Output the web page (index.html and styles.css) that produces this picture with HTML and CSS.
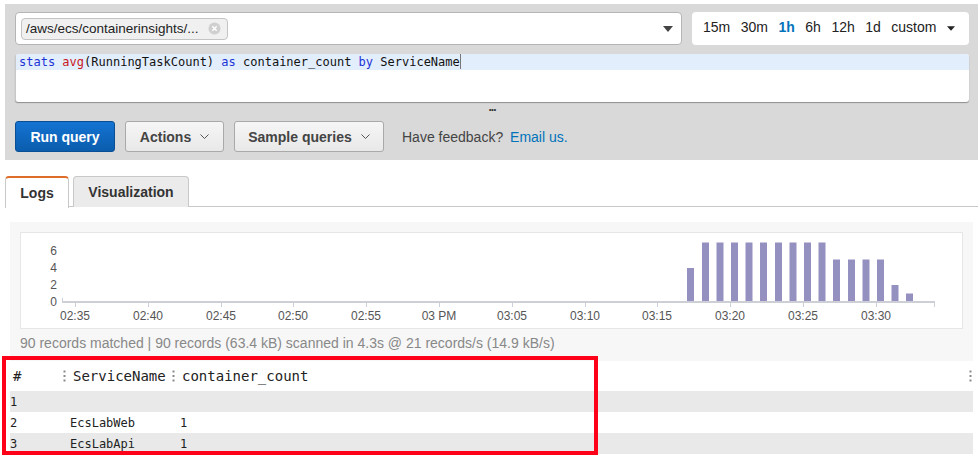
FILE: index.html
```html
<!DOCTYPE html>
<html>
<head>
<meta charset="utf-8">
<link rel="stylesheet" href="styles.css">
</head>
<body>
<div class="page">
  <section class="query-panel">
    <div class="top-row">
      <div class="group-select">
        <span class="chip">/aws/ecs/containerinsights/...
          <svg class="chip-x" width="13" height="13" viewBox="0 0 13 13"><circle cx="6.5" cy="6.5" r="6" fill="#cfcfcf"/><path d="M4.3 4.3l4.4 4.4M8.7 4.3l-4.4 4.4" stroke="#fff" stroke-width="1.5"/></svg>
        </span>
        <svg class="caret" width="10" height="6" viewBox="0 0 10 6"><path d="M0 0h10L5 6z" fill="#444"/></svg>
      </div>
      <div class="time-range">
        <span>15m</span><span>30m</span><span class="active">1h</span><span>6h</span><span>12h</span><span>1d</span><span>custom</span>
        <svg class="tr-caret" width="9" height="5" viewBox="0 0 9 5"><path d="M0 0h9L4.5 5z" fill="#222"/></svg>
      </div>
    </div>
    <div class="editor">
      <div class="line active-line"><span class="kw">stats</span> <span class="fn">avg</span>(RunningTaskCount) <span class="kw">as</span> container_count <span class="kw">by</span> ServiceName<span class="cursor"></span></div>
    </div>
    <div class="grip">...</div>
    <div class="btn-row">
      <button class="btn primary">Run query</button>
      <button class="btn btn-actions">Actions <svg class="chev" width="9" height="5" viewBox="0 0 9 5"><path d="M0.5 0.5l4 4 4-4" fill="none" stroke="#555" stroke-width="1"/></svg></button>
      <button class="btn btn-sample">Sample queries <svg class="chev" width="9" height="5" viewBox="0 0 9 5"><path d="M0.5 0.5l4 4 4-4" fill="none" stroke="#555" stroke-width="1"/></svg></button>
      <span class="feedback">Have feedback? <a class="link">Email us.</a></span>
    </div>
  </section>

  <nav class="tabs">
    <div class="tab active">Logs</div>
    <div class="tab tab-vis">Visualization</div>
  </nav>

  <section class="results">
    <div class="chart-box">
      <svg class="chart" width="943" height="97" viewBox="0 0 943 97">
        <g font-family="Liberation Sans, Arial, sans-serif" font-size="12" fill="#555" text-anchor="end">
          <text x="37" y="23">6</text>
          <text x="37" y="40">4</text>
          <text x="37" y="57">2</text>
          <text x="37" y="74">0</text>
        </g>
        <g fill="#9491c1">
          <rect x="667" y="36" width="7" height="34"/>
          <rect x="682" y="10.5" width="7" height="59.5"/>
          <rect x="696.5" y="10.5" width="7" height="59.5"/>
          <rect x="711" y="10.5" width="7" height="59.5"/>
          <rect x="725.5" y="10.5" width="7" height="59.5"/>
          <rect x="740" y="10.5" width="7" height="59.5"/>
          <rect x="755" y="10.5" width="7" height="59.5"/>
          <rect x="769.5" y="10.5" width="7" height="59.5"/>
          <rect x="784" y="10.5" width="7" height="59.5"/>
          <rect x="798.5" y="10.5" width="7" height="59.5"/>
          <rect x="813" y="27.5" width="7" height="42.5"/>
          <rect x="828" y="27.5" width="7" height="42.5"/>
          <rect x="842.5" y="27.5" width="7" height="42.5"/>
          <rect x="857" y="27.5" width="7" height="42.5"/>
          <rect x="871.5" y="53" width="7" height="17"/>
          <rect x="886" y="61.5" width="7" height="8.5"/>
        </g>
        <g stroke="#ccd0d6" fill="none">
          <path d="M42 70H915" stroke-width="2"/>
          <path d="M42.5 66v4" stroke-width="1"/>
          <path d="M914.5 69v6" stroke-width="1"/>
          <path d="M55.5 70v5M128.5 70v5M201.5 70v5M273.5 70v5M346.5 70v5M419.5 70v5M492.5 70v5M565.5 70v5M637.5 70v5M710.5 70v5M783.5 70v5M856.5 70v5" stroke-width="1"/>
        </g>
        <g font-family="Liberation Sans, Arial, sans-serif" font-size="12" fill="#555" text-anchor="middle">
          <text x="55" y="88">02:35</text>
          <text x="128" y="88">02:40</text>
          <text x="201" y="88">02:45</text>
          <text x="273" y="88">02:50</text>
          <text x="346" y="88">02:55</text>
          <text x="419" y="88">03 PM</text>
          <text x="492" y="88">03:05</text>
          <text x="565" y="88">03:10</text>
          <text x="637" y="88">03:15</text>
          <text x="710" y="88">03:20</text>
          <text x="783" y="88">03:25</text>
          <text x="856" y="88">03:30</text>
        </g>
      </svg>
    </div>
    <div class="stats">90 records matched | 90 records (63.4 kB) scanned in 4.3s @ 21 records/s (14.9 kB/s)</div>
  </section>

  <section class="table">
    <div class="thead">
      <div class="c-num">#</div>
      <div class="c-sep"><svg width="3" height="12" viewBox="0 0 3 12"><g fill="#8a8a8a"><rect x="0.5" y="0.5" width="2" height="2"/><rect x="0.5" y="5" width="2" height="2"/><rect x="0.5" y="9.5" width="2" height="2"/></g></svg></div>
      <div class="c-name">ServiceName</div>
      <div class="c-sep"><svg width="3" height="12" viewBox="0 0 3 12"><g fill="#8a8a8a"><rect x="0.5" y="0.5" width="2" height="2"/><rect x="0.5" y="5" width="2" height="2"/><rect x="0.5" y="9.5" width="2" height="2"/></g></svg></div>
      <div class="c-count">container_count</div>
      <div class="c-fill"></div>
      <div class="c-menu"><svg width="3" height="12" viewBox="0 0 3 12"><g fill="#8a8a8a"><rect x="0.5" y="0.5" width="2" height="2"/><rect x="0.5" y="5" width="2" height="2"/><rect x="0.5" y="9.5" width="2" height="2"/></g></svg></div>
    </div>
    <div class="row odd"><div class="r-num">1</div><div class="r-name"></div><div class="r-count"></div></div>
    <div class="row"><div class="r-num">2</div><div class="r-name">EcsLabWeb</div><div class="r-count">1</div></div>
    <div class="row odd"><div class="r-num">3</div><div class="r-name">EcsLabApi</div><div class="r-count">1</div></div>
  </section>

  <div class="highlight-box"></div>
</div>
</body>
</html>
```

FILE: styles.css
```css
* { box-sizing: border-box; }
html, body { margin: 0; padding: 0; background: #fff; }
body {
  font-family: "Liberation Sans", Arial, sans-serif;
  font-size: 14px;
  color: #333;
  width: 978px;
  height: 458px;
  overflow: hidden;
}
.page {
  position: relative;
  padding: 4px 0 0 5px;
}

/* query panel */
.query-panel {
  background: #d9d9d9;
  padding: 8px 9px 8px 10px;
}
.top-row {
  display: flex;
  gap: 10px;
  height: 33px;
}
.group-select {
  flex: 1;
  background: #fff;
  border: 1px solid #b5b5b5;
  border-radius: 4px;
  display: flex;
  align-items: center;
  padding: 0 8px 0 5px;
}
.chip {
  display: inline-flex;
  align-items: center;
  height: 22px;
  padding: 0 6px 0 4px;
  background: #f0f0f0;
  border: 1px solid #c4c4c4;
  border-radius: 4px;
  font-size: 13.5px;
  color: #222;
  gap: 9px;
}
.chip-x { display: block; }
.caret { margin-left: auto; display: block; }
.time-range {
  width: 277px;
  background: #fff;
  border-radius: 4px;
  display: flex;
  align-items: center;
  gap: 10.5px;
  padding: 0 14px 3px 11px;
  font-size: 14px;
  color: #222;
}
.time-range .active { color: #0073bb; font-weight: bold; }
.tr-caret { margin-left: auto; display: block; margin-top: 2px; }

.editor {
  margin-top: 9px;
  height: 48px;
  background: #fff;
  border-radius: 3px;
  border-left: 1px solid #c8c8c8;
  box-shadow: 0 1px 1px rgba(0,0,0,0.35);
  overflow: hidden;
}
.line {
  height: 16px;
  line-height: 16px;
  font-family: "DejaVu Sans Mono", Menlo, monospace;
  font-size: 12px;
  color: #111;
  padding-left: 3px;
  white-space: pre;
}
.active-line { background: #e3eefc; }
.kw { color: #1d35d6; }
.fn { color: #c8161d; }
.cursor {
  display: inline-block;
  width: 1px;
  height: 15px;
  background: #777;
  vertical-align: top;
}
.grip {
  height: 19px;
  line-height: 10px;
  text-align: center;
  font-size: 12px;
  font-weight: bold;
  color: #333;
  letter-spacing: -1px;
}

.btn-row {
  display: flex;
  align-items: center;
  height: 31px;
}
.btn {
  height: 31px;
  font-family: "Liberation Sans", Arial, sans-serif;
  font-size: 14px;
  font-weight: bold;
  color: #444;
  border: 1px solid #a9a9a9;
  border-radius: 3px;
  background: linear-gradient(#f6f6f6, #e8e8e8);
  padding: 0 10px;
  display: inline-flex;
  align-items: center;
  justify-content: center;
  gap: 9px;
  margin-right: 10px;
  white-space: nowrap;
}
.btn.primary {
  width: 100px;
  color: #fff;
  background: linear-gradient(#1473d2, #0a5dad);
  border-color: #0a4f96;
}
.btn-actions { width: 99px; }
.btn-sample { width: 150px; }
.feedback {
  margin-left: 8px;
  color: #444;
  font-size: 14px;
}
.link { color: #0073bb; margin-left: 3px; }

/* tabs */
.tabs {
  margin-top: 16px;
  display: flex;
  gap: 4px;
  border-bottom: 1px solid #c8c8c8;
  height: 31px;
}
.tab {
  height: 31px;
  padding: 0 16px;
  font-weight: bold;
  font-size: 14px;
  color: #333;
  display: flex;
  align-items: center;
  justify-content: center;
  border: 1px solid #c8c8c8;
  border-bottom: none;
  border-radius: 4px 4px 0 0;
  background: #ebebeb;
}
.tab.active {
  background: #fff;
  width: 64px;
  border-top: 2px solid #df6d2a;
  height: 32px;
  margin-bottom: -1px;
}
.tab-vis { width: 116px; }

/* results */
.results {
  margin: 15px 0 0 5px;
  width: 963px;
  background: #f7f7f7;
  padding: 10px 10px 0 10px;
}
.chart-box {
  height: 97px;
  background: #fff;
  border: 1px solid #e6e6e6;
}
.chart { display: block; margin: -1px 0 0 -1px; }
.stats {
  height: 32px;
  line-height: 28px;
  padding-left: 0;
  color: #888;
  font-size: 14px;
}

.table {
  margin-left: 5px;
  width: 963px;
}
.thead {
  display: flex;
  align-items: center;
  height: 30px;
  background: #fff;
  font-family: "DejaVu Sans Mono", Menlo, monospace;
  font-size: 14px;
  color: #222;
}
.thead svg { display: block; }
.c-num { width: 53px; padding-left: 3px; }
.c-sep { width: 10px; }
.c-name { width: 99px; }
.c-count { width: 140px; }
.c-fill { flex: 1; }
.c-menu { width: 8px; padding-left: 4px; }
.row {
  display: flex;
  align-items: center;
  height: 21px;
  font-family: "DejaVu Sans Mono", Menlo, monospace;
  font-size: 12px;
  color: #222;
  background: #fff;
}
.row.odd { background: #e9e9e9; }
.r-num { width: 60px; color: #222; }
.r-name { width: 110px; }
.r-count { width: 60px; }

.highlight-box {
  position: absolute;
  left: 2px;
  top: 356px;
  width: 596px;
  height: 99px;
  border: 4px solid #ff0019;
}
```
